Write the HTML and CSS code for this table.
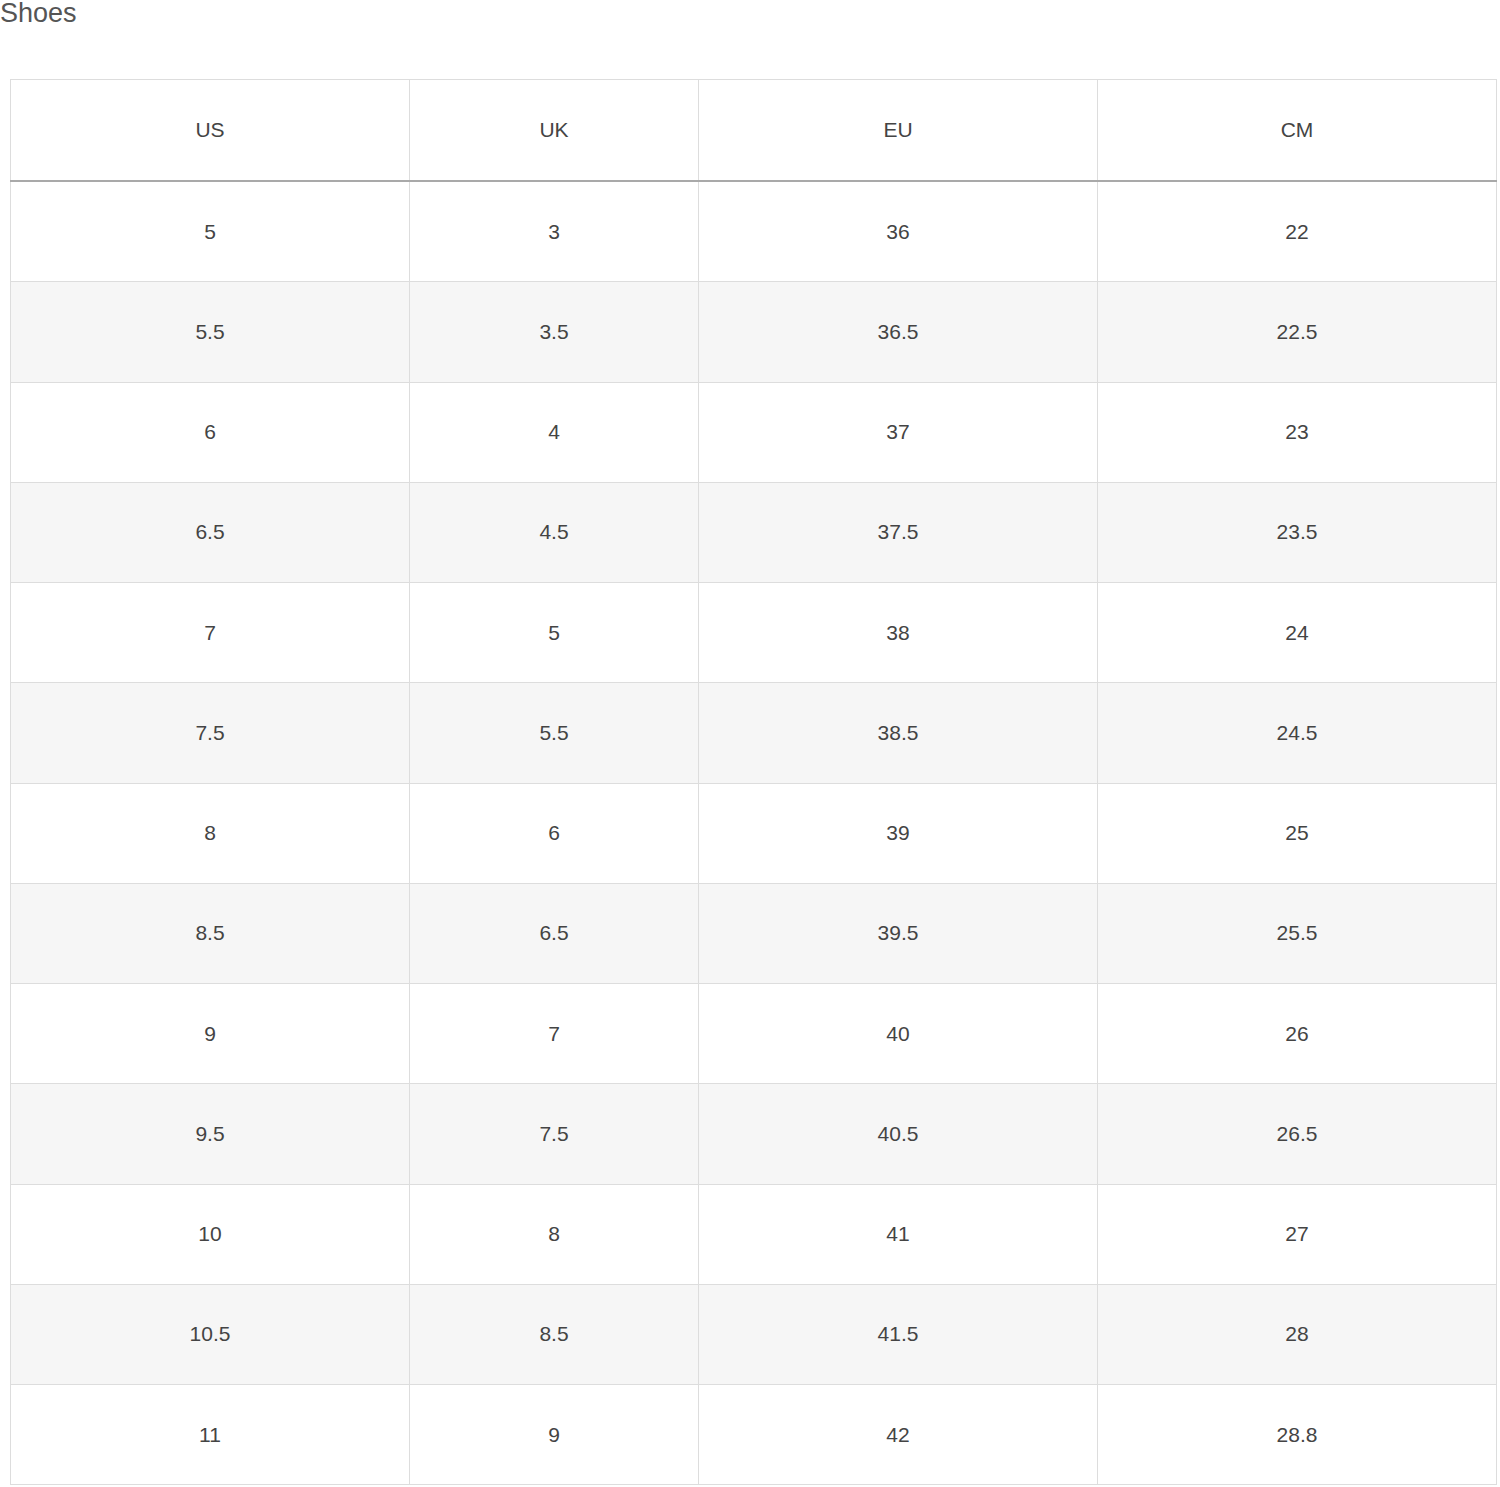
FILE: index.html
```html
<!DOCTYPE html>
<html>
<head>
<meta charset="utf-8">
<link rel="stylesheet" href="styles.css">
</head>
<body>
<h1 class="title">Shoes</h1>
<table class="sizes">
<colgroup><col class="c1"><col class="c2"><col class="c3"><col class="c4"></colgroup>
<thead><tr><th>US</th><th>UK</th><th>EU</th><th>CM</th></tr></thead>
<tbody>
<tr><td>5</td><td>3</td><td>36</td><td>22</td></tr>
<tr><td>5.5</td><td>3.5</td><td>36.5</td><td>22.5</td></tr>
<tr><td>6</td><td>4</td><td>37</td><td>23</td></tr>
<tr><td>6.5</td><td>4.5</td><td>37.5</td><td>23.5</td></tr>
<tr><td>7</td><td>5</td><td>38</td><td>24</td></tr>
<tr><td>7.5</td><td>5.5</td><td>38.5</td><td>24.5</td></tr>
<tr><td>8</td><td>6</td><td>39</td><td>25</td></tr>
<tr><td>8.5</td><td>6.5</td><td>39.5</td><td>25.5</td></tr>
<tr><td>9</td><td>7</td><td>40</td><td>26</td></tr>
<tr><td>9.5</td><td>7.5</td><td>40.5</td><td>26.5</td></tr>
<tr><td>10</td><td>8</td><td>41</td><td>27</td></tr>
<tr><td>10.5</td><td>8.5</td><td>41.5</td><td>28</td></tr>
<tr><td>11</td><td>9</td><td>42</td><td>28.8</td></tr>
</tbody>
</table>
</body>
</html>
```
FILE: styles.css
```css
html, body {
  margin: 0;
  padding: 0;
  background: #ffffff;
}
body {
  font-family: "Liberation Sans", Arial, sans-serif;
  color: #444444;
}
.title {
  margin: 0;
  font-size: 27px;
  font-weight: normal;
  line-height: 26px;
  color: #555555;
}
.sizes {
  margin: 53px 0 0 10px;
  width: 1486px;
  border-collapse: collapse;
  table-layout: fixed;
}
.c1 { width: 399px; }
.c2 { width: 289px; }
.c3 { width: 399px; }
.c4 { width: 399px; }
.sizes th, .sizes td {
  border: 1px solid #dddddd;
  text-align: center;
  vertical-align: middle;
  font-size: 21px;
  font-weight: normal;
  color: #444444;
  padding: 0;
}
.sizes th {
  height: 100px;
  border-bottom: 2px solid #a9a9a9;
}
.sizes td {
  height: 99.25px;
}
.sizes tbody tr:nth-child(even) td {
  background: #f6f6f6;
}
```
